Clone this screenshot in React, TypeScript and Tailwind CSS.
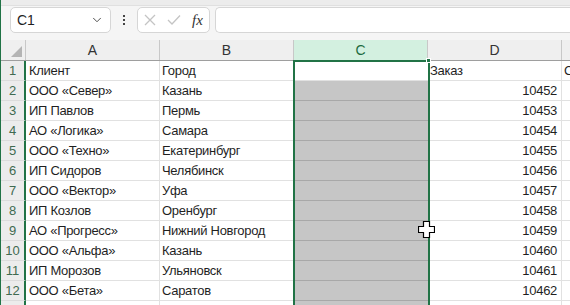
import { ChevronDown } from "lucide-react";

const ROWS: [string, string, string][] = [
  ["Клиент", "Город", "Заказ"],
  ["ООО «Север»", "Казань", "10452"],
  ["ИП Павлов", "Пермь", "10453"],
  ["АО «Логика»", "Самара", "10454"],
  ["ООО «Техно»", "Екатеринбург", "10455"],
  ["ИП Сидоров", "Челябинск", "10456"],
  ["ООО «Вектор»", "Уфа", "10457"],
  ["ИП Козлов", "Оренбург", "10458"],
  ["АО «Прогресс»", "Нижний Новгород", "10459"],
  ["ООО «Альфа»", "Казань", "10460"],
  ["ИП Морозов", "Ульяновск", "10461"],
  ["ООО «Бета»", "Саратов", "10462"],
  ["", "", ""],
];

const font = { fontFamily: '"Liberation Sans", Arial, sans-serif' };

export default function App() {
  return (
    <div className="relative h-[305px] w-[570px] overflow-hidden border-l border-[#217346] bg-[#f5f5f5] text-[#1f1f1f]" style={font}>
      {/* top strip */}
      <div className="h-[6px] border-b border-[#e0e0e0] bg-[#ececec]" />

      {/* formula bar */}
      <div className="flex h-[34px] items-start gap-[5px] pl-[9px] pt-[1px]">
        <div className="flex h-[26px] w-[101px] items-center justify-between rounded-[5px] border border-[#d6d6d6] bg-white pl-[6px] pr-[6px] text-[14px]">
          <span>C1</span>
          <ChevronDown size={14} strokeWidth={1.6} className="text-[#444]" />
        </div>
        <div className="flex h-[26px] w-[16px] flex-col items-center justify-center gap-[2px]">
          <span className="h-[2px] w-[2px] bg-[#444]" />
          <span className="h-[2px] w-[2px] bg-[#444]" />
          <span className="h-[2px] w-[2px] bg-[#444]" />
        </div>
        <div className="flex h-[26px] w-[73px] items-center gap-[11px] rounded-[5px] border border-[#d6d6d6] bg-white pl-[6px]">
          <svg width="12" height="12" viewBox="0 0 12 12" className="text-[#c4c4c4]">
            <path d="M1 1L11 11M11 1L1 11" stroke="currentColor" strokeWidth="1.3" />
          </svg>
          <svg width="14" height="12" viewBox="0 0 14 12" className="text-[#c4c4c4]">
            <path d="M1 6L5 10L13 1.5" stroke="currentColor" strokeWidth="1.3" fill="none" />
          </svg>
          <span className="text-[15px] italic text-[#333]" style={{ fontFamily: '"Liberation Serif", serif' }}>fx</span>
        </div>
        <div className="h-[26px] flex-1 rounded-l-[5px] border border-r-0 border-[#d6d6d6] bg-white" />
      </div>

      {/* column headers */}
      <div className="flex h-[21px] border-b border-[#9e9e9e] bg-[#efefef] text-[14px] text-[#333]">
        <div className="relative w-[25px] border-r border-[#c8c8c8]">
          <svg width="11" height="11" viewBox="0 0 11 11" className="absolute bottom-[3px] right-[3px]">
            <path d="M11 0L11 11L0 11Z" fill="#b4b4b4" />
          </svg>
        </div>
        <div className="flex w-[134px] items-center justify-center border-r border-[#c8c8c8]">A</div>
        <div className="flex w-[134px] items-center justify-center border-r border-[#c8c8c8]">B</div>
        <div className="flex w-[134px] items-center justify-center border-r border-[#c8c8c8] bg-[#d3f0e0] text-[#1d6b40]">C</div>
        <div className="flex w-[134px] items-center justify-center border-r border-[#c8c8c8]">D</div>
        <div className="flex-1" />
      </div>

      {/* rows */}
      <div className="bg-white text-[13px] tracking-[-0.3px]">
        {ROWS.map((r, i) => (
          <div key={i} className="flex h-[20px]">
            <div className="flex w-[25px] items-center justify-center border-b border-r-2 border-b-[#dcdcdc] border-r-[#217346] bg-[#ececec] text-[13px] tracking-normal text-[#3f6a50]">
              {i < 12 ? i + 1 : ""}
            </div>
            <div className="flex w-[134px] items-center overflow-hidden whitespace-nowrap border-b border-r border-[#e1e1e1] pl-[3px]">{r[0]}</div>
            <div className="flex w-[134px] items-center overflow-hidden whitespace-nowrap border-b border-r border-[#e1e1e1] pl-[2px]">{r[1]}</div>
            <div className={`w-[134px] border-b ${i === 0 ? "border-[#e1e1e1] bg-white" : "border-[#a8a8a8] bg-[#c6c6c6]"}`} />
            <div className={`flex w-[134px] items-center overflow-hidden whitespace-nowrap border-b border-r border-[#e1e1e1] ${i === 0 ? "pl-[2px]" : "justify-end pr-[4px]"}`}>{r[2]}</div>
            <div className="flex flex-1 items-center overflow-hidden whitespace-nowrap border-b border-[#e1e1e1] pl-[2px]">{i === 0 ? "Сумма" : ""}</div>
          </div>
        ))}
      </div>

      {/* selection border on column C */}
      <div className="pointer-events-none absolute left-[292px] top-[60px] h-[260px] w-[137px] border-2 border-[#217346]" />
      <div className="absolute left-[425px] top-[58px] h-[5px] w-[5px] border border-white bg-[#217346]" />

      {/* cursor */}
      <svg width="17" height="17" viewBox="0 0 17 17" className="absolute left-[417px] top-[221px]">
        <path d="M5.5 0.5H11.5V5.5H16.5V11.5H11.5V16.5H5.5V11.5H0.5V5.5H5.5Z" fill="white" stroke="black" strokeWidth="1.2" />
      </svg>
    </div>
  );
}
